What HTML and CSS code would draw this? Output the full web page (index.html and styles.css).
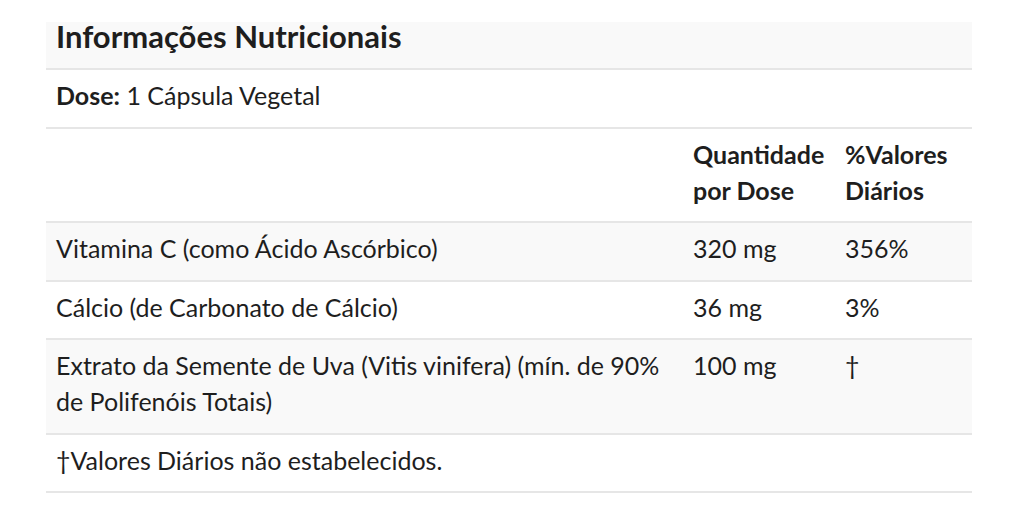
FILE: index.html
```html
<!DOCTYPE html>
<html lang="pt-BR">
<head>
  <meta charset="UTF-8">
  <meta name="viewport" content="width=device-width, initial-scale=1.0">
  <title>Informações Nutricionais</title>
  <link rel="stylesheet" href="styles.css">
</head>
<body>
  <div class="page">
    <table class="nutrition">
      <colgroup>
        <col class="col-name">
        <col class="col-qty">
        <col class="col-dv">
      </colgroup>
      <thead>
        <tr class="title-row">
          <th colspan="3">Informações Nutricionais</th>
        </tr>
      </thead>
      <tbody>
        <tr>
          <td colspan="3"><strong>Dose:</strong> 1 Cápsula Vegetal</td>
        </tr>
        <tr class="head-row">
          <td></td>
          <th>Quantidade por Dose</th>
          <th>%Valores Diários</th>
        </tr>
        <tr class="shaded">
          <td class="name">Vitamina C (como Ácido Ascórbico)</td>
          <td>320 mg</td>
          <td>356%</td>
        </tr>
        <tr>
          <td class="name">Cálcio (de Carbonato de Cálcio)</td>
          <td>36 mg</td>
          <td>3%</td>
        </tr>
        <tr class="shaded">
          <td class="name">Extrato da Semente de Uva (Vitis vinifera) (mín. de 90% de Polifenóis Totais)</td>
          <td>100 mg</td>
          <td>†</td>
        </tr>
        <tr class="last-row">
          <td colspan="3">†Valores Diários não estabelecidos.</td>
        </tr>
      </tbody>
    </table>
  </div>
</body>
</html>
```

FILE: styles.css
```css
body {
  margin: 0;
  background-color: #fff;
  font-family: Lato, "Open Sans", sans-serif;
  color: #1e1e1e;
}

.page {
  padding: 22px 0 0 46px;
}

.nutrition {
  width: 926px;
  border-collapse: collapse;
  table-layout: fixed;
  font-size: 25px;
  line-height: 36px;
}

.col-name {
  width: 637px;
}

.col-qty {
  width: 152px;
}

.col-dv {
  width: 137px;
}

.nutrition th,
.nutrition td {
  padding: 7px 10px 13.5px;
  text-align: left;
  vertical-align: top;
  border-top: 2px solid #e6e6e6;
}

.nutrition th {
  font-weight: 700;
}

.nutrition .name {
  padding-right: 20px;
}

.title-row th {
  font-size: 31px;
  line-height: 24px;
  padding: 2px 10px 20px;
  border-top: none;
  background-color: #f9f9f9;
}

.shaded td {
  background-color: #f9f9f9;
}

.last-row td {
  border-bottom: 2px solid #e6e6e6;
}
```
